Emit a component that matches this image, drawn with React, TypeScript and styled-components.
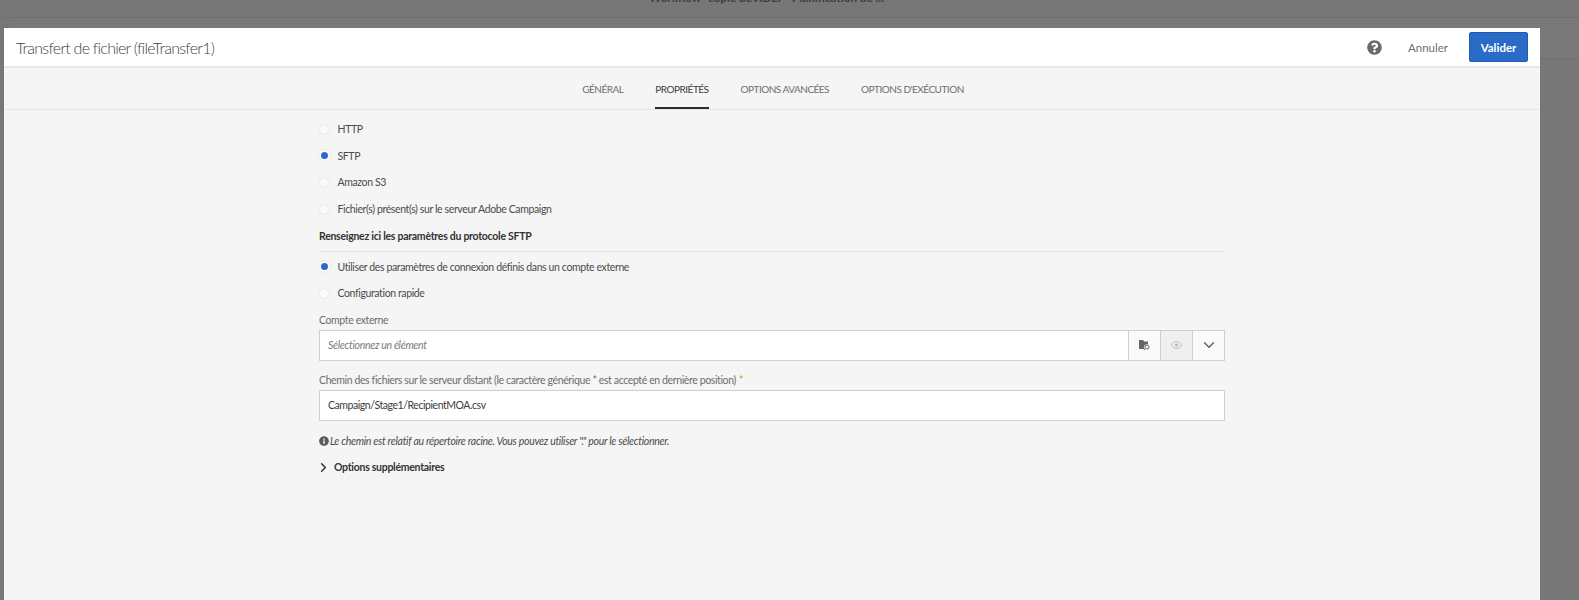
import React from "react";
import styled, { createGlobalStyle } from "styled-components";
import { FaQuestionCircle, FaInfoCircle } from "react-icons/fa";
import { FiChevronDown, FiChevronRight } from "react-icons/fi";

const Global = createGlobalStyle`
  html, body {
    margin: 0;
    height: 100%;
    overflow: hidden;
    background: #777777;
  }
  body {
    font-family: Lato, "Open Sans", sans-serif;
    color: #4b4b4b;
  }
  #root {
    height: 100%;
  }
`;

const Page = styled.div`
  position: relative;
  height: 600px;
  overflow: hidden;
  background: #777777;
`;

const BackBar = styled.div`
  height: 18px;
  box-sizing: border-box;
  display: flex;
  justify-content: center;
  overflow: hidden;
  border-bottom: 1px solid #6f6f6f;
`;

const BackTitle = styled.div`
  margin-top: -10px;
  padding-right: 46px;
  font-size: 11.7px;
  font-weight: 700;
  color: #3d3d3d;
  line-height: 14px;
  white-space: nowrap;
`;

const BackPanel = styled.div`
  height: 41px;
  margin-left: 12px;
  box-sizing: border-box;
  background: #797979;
  border-bottom: 1px solid #6f6f6f;
`;

const Modal = styled.div`
  position: absolute;
  top: 28px;
  left: 4px;
  bottom: 0;
  width: 1536px;
  background: #f5f5f5;
  display: flex;
  flex-direction: column;
  border-radius: 2px 2px 0 0;
`;

const Header = styled.header`
  height: 40px;
  flex: none;
  box-sizing: border-box;
  background: #fff;
  border-bottom: 2px solid #e8e8e8;
  display: flex;
  align-items: center;
  padding: 0 12px;
`;

const Title = styled.h1`
  margin: 0;
  font-size: 16px;
  font-weight: 300;
  letter-spacing: -0.75px;
  color: #3f3f3f;
  flex: 1;
`;

const HelpIcon = styled(FaQuestionCircle)`
  width: 15px;
  height: 15px;
  color: #6a6a6a;
`;

const CancelButton = styled.button`
  border: 0;
  background: none;
  padding: 0;
  margin-left: 26px;
  font: inherit;
  font-size: 11.5px;
  color: #6e6e6e;
`;

const SubmitButton = styled.button`
  width: 59px;
  height: 30px;
  margin-left: 21px;
  border: 1px solid #1f5bb0;
  border-radius: 2px;
  background: #2b6bc8;
  color: #fff;
  font: inherit;
  font-size: 11.5px;
  font-weight: 700;
  padding: 0;
`;

const Tabs = styled.nav`
  height: 42px;
  flex: none;
  box-sizing: border-box;
  border-bottom: 1px solid #e6e6e6;
  display: flex;
  justify-content: center;
  gap: 32px;
  padding-left: 2px;
`;

const Tab = styled.div<{ $active?: boolean }>`
  height: 41px;
  box-sizing: border-box;
  display: flex;
  align-items: center;
  padding-top: 2px;
  font-size: 10px;
  letter-spacing: -0.5px;
  color: ${(p) => (p.$active ? "#3c3c3c" : "#6e6e6e")};
  border-bottom: 2px solid ${(p) => (p.$active ? "#2c2c2c" : "transparent")};
`;

const Body = styled.main`
  width: 906px;
  margin-left: 315px;
  display: flex;
  flex-direction: column;
`;

const RadioGroup = styled.div<{ $top: number }>`
  margin-top: ${(p) => p.$top}px;
  display: flex;
  flex-direction: column;
`;

const RadioRow = styled.div`
  height: 26.6px;
  display: flex;
  align-items: center;
  gap: 7.5px;
  font-size: 10.5px;
  letter-spacing: -0.38px;
  color: #4b4b4b;
`;

const RadioDot = styled.span<{ $checked?: boolean }>`
  width: 11px;
  height: 11px;
  flex: none;
  box-sizing: border-box;
  border-radius: 50%;
  background: ${(p) => (p.$checked ? "#2b6bc8" : "#fafafa")};
  border: ${(p) => (p.$checked ? "2.5px solid #fbfbfb" : "1px solid #eaeaea")};
  box-shadow: 0 0 0 ${(p) => (p.$checked ? "1px" : "0")} #ececec;
`;

const SectionTitle = styled.div`
  margin-top: 7px;
  padding-bottom: 8px;
  border-bottom: 1px solid #e4e4e4;
  font-size: 10.5px;
  line-height: 14px;
  font-weight: 700;
  letter-spacing: -0.27px;
  color: #333;
`;

const FieldLabel = styled.label<{ $top: number }>`
  display: block;
  font-size: 10.5px;
  line-height: 14px;
  letter-spacing: -0.38px;
  color: #6e6e6e;
  margin-top: ${(p) => p.$top}px;
`;

const Required = styled.span`
  color: #e68619;
  margin-left: 3px;
`;

const InputRow = styled.div`
  margin-top: 3px;
  height: 31px;
  box-sizing: border-box;
  display: flex;
  border: 1px solid #cfcfcf;
  background: #fff;
`;

const InputText = styled.div<{ $placeholder?: boolean }>`
  flex: 1;
  padding-left: 8px;
  display: flex;
  align-items: center;
  font-size: 10.5px;
  letter-spacing: ${(p) => (p.$placeholder ? "-0.3px" : "-0.45px")};
  font-style: ${(p) => (p.$placeholder ? "italic" : "normal")};
  color: ${(p) => (p.$placeholder ? "#7a7a7a" : "#3c3c3c")};
`;

const AddonButton = styled.div<{ $disabled?: boolean }>`
  width: 32px;
  flex: none;
  box-sizing: border-box;
  display: flex;
  align-items: center;
  justify-content: center;
  border-left: 1px solid #cfcfcf;
  background: ${(p) => (p.$disabled ? "#efefef" : "#fafafa")};
`;

const Hint = styled.div`
  margin-top: 13px;
  display: flex;
  align-items: center;
  gap: 1px;
  font-size: 10.5px;
  line-height: 14px;
  font-style: italic;
  letter-spacing: -0.28px;
  color: #4b4b4b;
`;

const HintIcon = styled(FaInfoCircle)`
  width: 10px;
  height: 10px;
  color: #5a5a5a;
`;

const Disclosure = styled.div`
  margin-top: 12px;
  display: flex;
  align-items: center;
  gap: 3px;
  font-size: 10.5px;
  line-height: 14px;
  font-weight: 700;
  letter-spacing: -0.28px;
  color: #333;
`;

const DisclosureIcon = styled(FiChevronRight)`
  margin-left: -3px;
  width: 15px;
  height: 15px;
  color: #222;
`;

const radios = [
  { label: "HTTP" },
  { label: "SFTP", checked: true },
  { label: "Amazon S3" },
  { label: "Fichier(s) présent(s) sur le serveur Adobe Campaign" },
];

const Radio = ({ label, checked }: { label: string; checked?: boolean }) => (
  <RadioRow>
    <RadioDot $checked={checked} />
    {label}
  </RadioRow>
);

const App = () => (
  <Page>
    <Global />
    <BackBar>
      <BackTitle>Workflow "copie de ADLP" Planification de ...</BackTitle>
    </BackBar>
    <BackPanel />
    <Modal>
      <Header>
        <Title>Transfert de fichier (fileTransfer1)</Title>
        <HelpIcon />
        <CancelButton>Annuler</CancelButton>
        <SubmitButton>Valider</SubmitButton>
      </Header>
      <Tabs>
        <Tab>GÉNÉRAL</Tab>
        <Tab $active>PROPRIÉTÉS</Tab>
        <Tab>OPTIONS AVANCÉES</Tab>
        <Tab>OPTIONS D'EXÉCUTION</Tab>
      </Tabs>
      <Body>
        <RadioGroup $top={6}>
          {radios.map((r) => (
            <Radio key={r.label} label={r.label} checked={r.checked} />
          ))}
        </RadioGroup>
        <SectionTitle>Renseignez ici les paramètres du protocole SFTP</SectionTitle>
        <RadioGroup $top={1}>
          <Radio
            label="Utiliser des paramètres de connexion définis dans un compte externe"
            checked
          />
          <Radio label="Configuration rapide" />
        </RadioGroup>
        <FieldLabel $top={6}>Compte externe</FieldLabel>
        <InputRow>
          <InputText $placeholder>Sélectionnez un élément</InputText>
          <AddonButton>
            <svg width="12" height="12" viewBox="0 0 12 12">
              <path d="M0 1h4l1 1.500h4V5.500a3 3 0 0 0-3.600 4.500H0z" fill="#666" />
              <circle cx="8" cy="8" r="2" fill="none" stroke="#666" strokeWidth="1" />
              <path d="M6.500 9.500 5 11" stroke="#666" strokeWidth="1" />
            </svg>
          </AddonButton>
          <AddonButton $disabled>
            <svg width="11" height="8" viewBox="0 0 11 8">
              <path d="M0.500 4C2 1.500 3.800.5 5.500.5S9 1.500 10.500 4C9 6.500 7.200 7.500 5.500 7.500S2 6.500.5 4z" fill="none" stroke="#bdbdbd" strokeWidth="1" />
              <circle cx="5.500" cy="4" r="1.700" fill="#bdbdbd" />
            </svg>
          </AddonButton>
          <AddonButton>
            <FiChevronDown size={18} color="#666" />
          </AddonButton>
        </InputRow>
        <FieldLabel $top={12}>
          Chemin des fichiers sur le serveur distant (le caractère générique * est accepté en dernière position)
          <Required>*</Required>
        </FieldLabel>
        <InputRow>
          <InputText>Campaign/Stage1/RecipientMOA.csv</InputText>
        </InputRow>
        <Hint>
          <HintIcon />
          Le chemin est relatif au répertoire racine. Vous pouvez utiliser "." pour le sélectionner.
        </Hint>
        <Disclosure>
          <DisclosureIcon strokeWidth={2} />
          Options supplémentaires
        </Disclosure>
      </Body>
    </Modal>
  </Page>
);

export default App;
